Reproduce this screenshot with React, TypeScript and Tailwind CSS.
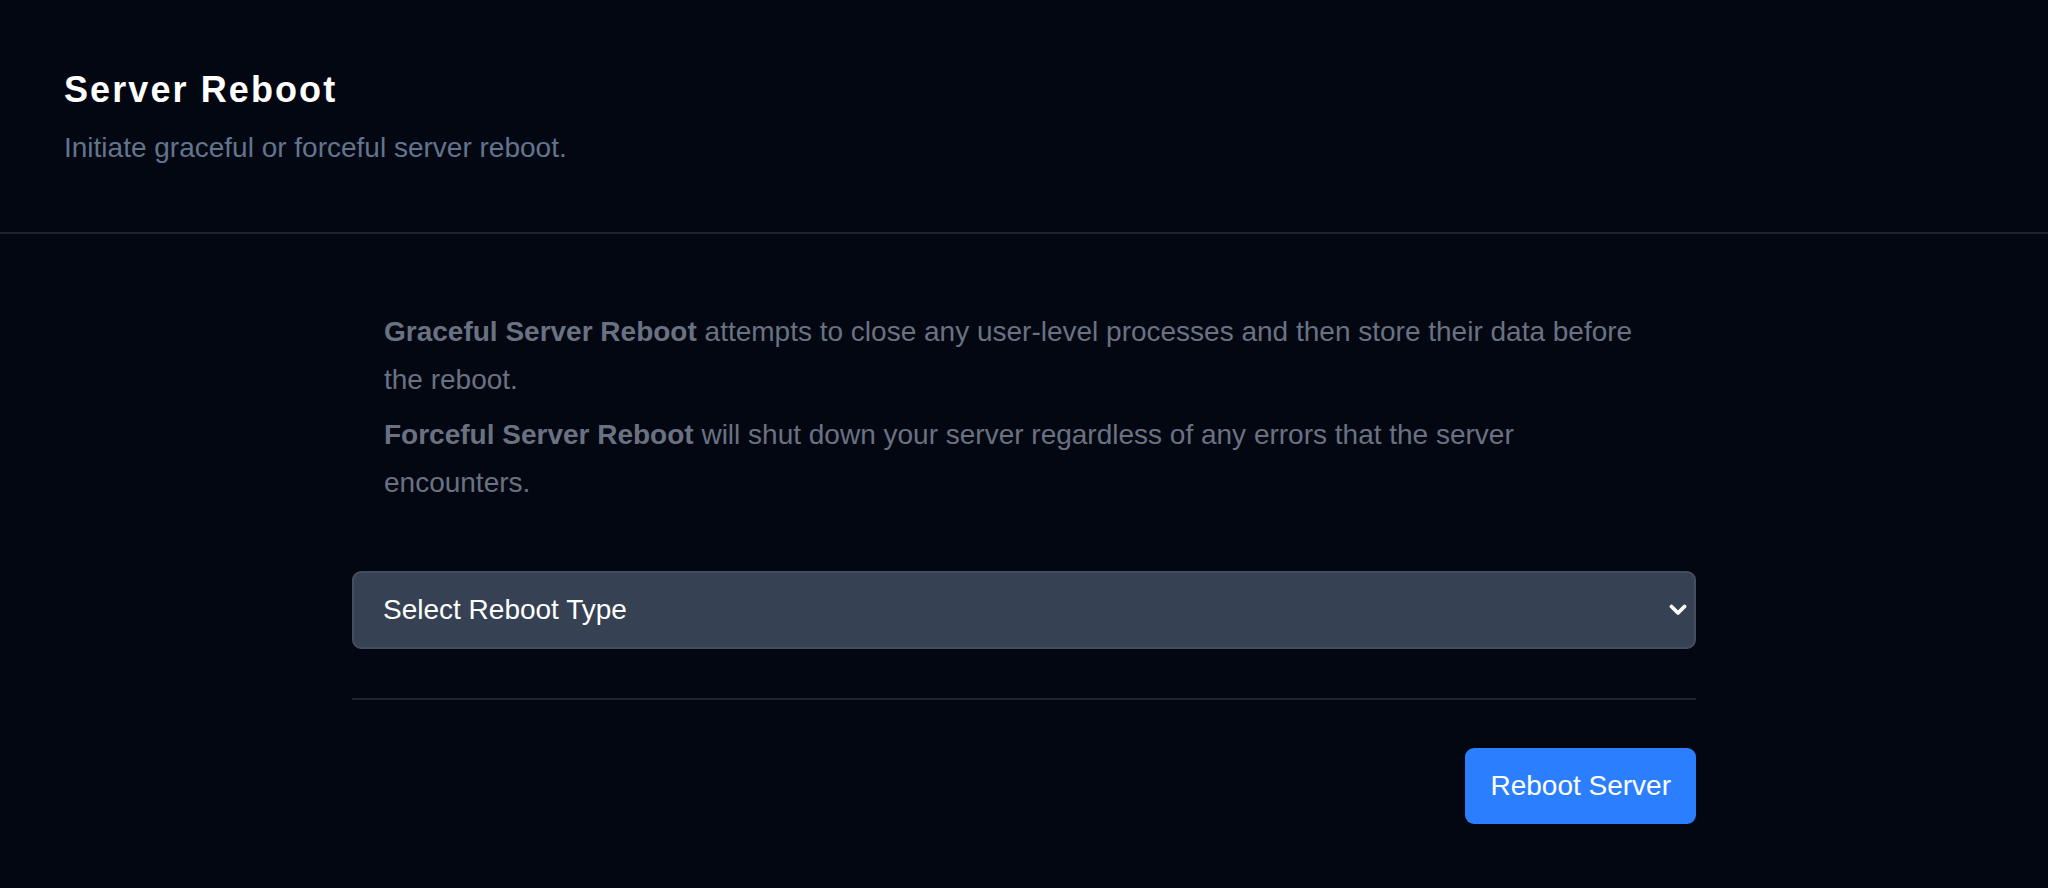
import React from "react";

export default function App() {
  return (
    <div
      className="min-h-screen w-full bg-[#030712] text-white"
      style={{ fontFamily: '"Liberation Sans", Arial, sans-serif' }}
    >
      <header className="border-b-2 border-[#1c2433] px-[64px] pt-[66px] pb-[63px]">
        <h1 className="text-[36px] leading-[48px] font-bold tracking-[0.058em] text-white">
          Server Reboot
        </h1>
        <p className="mt-[13px] text-[28px] leading-[42px] text-[#62748e]">
          Initiate graceful or forceful server reboot.
        </p>
      </header>

      <main className="mx-auto w-[1344px] pt-[74px] pb-[64px]">
        <div className="px-[32px] text-[28px] leading-[48px] text-[#6a7282]">
          <p>
            <strong className="font-bold">Graceful Server Reboot</strong> attempts to close any
            user-level processes and then store their data before the reboot.
          </p>
          <p className="mt-[7px]">
            <strong className="font-bold">Forceful Server Reboot</strong> will shut down your server
            regardless of any errors that the server encounters.
          </p>
        </div>

        <div className="relative mt-[64px]">
          <select
            defaultValue=""
            className="h-[78px] w-full appearance-none rounded-[9px] border-2 border-[#444e5e] bg-[#364153] pl-[29px] pr-[60px] text-[28px] text-white outline-none"
            style={{ fontFamily: '"Liberation Sans", Arial, sans-serif' }}
          >
            <option value="">Select Reboot Type</option>
            <option value="graceful">Graceful Server Reboot</option>
            <option value="forceful">Forceful Server Reboot</option>
          </select>
          <svg
            className="pointer-events-none absolute right-[9px] top-1/2 -translate-y-1/2"
            width="18"
            height="14"
            viewBox="0 0 18 14"
            fill="none"
          >
            <polyline
              points="2.5,3.5 9,10 15.5,3.5"
              stroke="white"
              strokeWidth="3.8"
              strokeLinecap="round"
              strokeLinejoin="round"
            />
          </svg>
        </div>

        <div className="mt-[49px] h-[2px] w-full bg-[#1c2433]" />

        <div className="mt-[48px] flex justify-end">
          <button className="h-[76px] rounded-[9px] bg-[#2b7fff] px-[25px] text-[28px] text-white">
            Reboot Server
          </button>
        </div>
      </main>
    </div>
  );
}
